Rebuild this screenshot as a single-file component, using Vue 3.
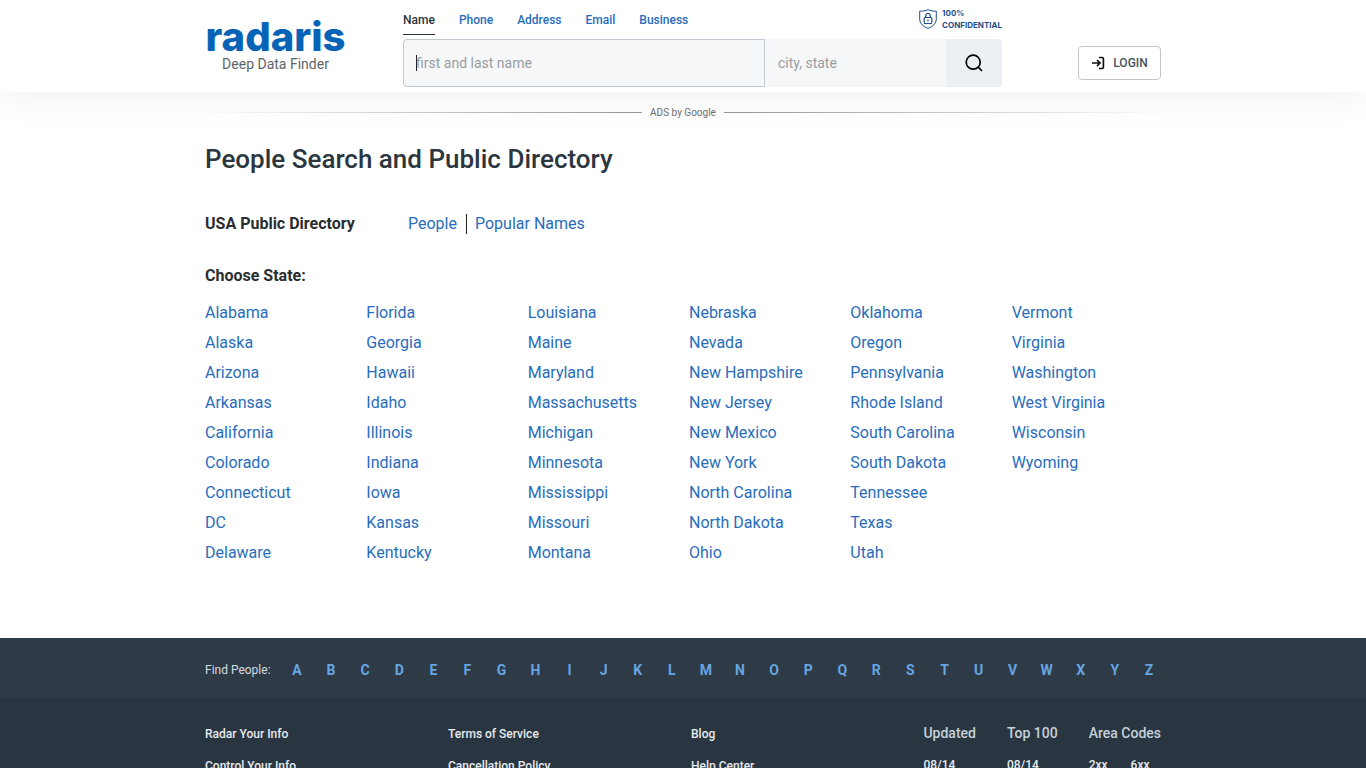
<script setup>
const tabs = ['Name', 'Phone', 'Address', 'Email', 'Business']
const states = [
  'Alabama', 'Alaska', 'Arizona', 'Arkansas', 'California', 'Colorado', 'Connecticut', 'DC', 'Delaware',
  'Florida', 'Georgia', 'Hawaii', 'Idaho', 'Illinois', 'Indiana', 'Iowa', 'Kansas', 'Kentucky',
  'Louisiana', 'Maine', 'Maryland', 'Massachusetts', 'Michigan', 'Minnesota', 'Mississippi', 'Missouri', 'Montana',
  'Nebraska', 'Nevada', 'New Hampshire', 'New Jersey', 'New Mexico', 'New York', 'North Carolina', 'North Dakota', 'Ohio',
  'Oklahoma', 'Oregon', 'Pennsylvania', 'Rhode Island', 'South Carolina', 'South Dakota', 'Tennessee', 'Texas', 'Utah',
  'Vermont', 'Virginia', 'Washington', 'West Virginia', 'Wisconsin', 'Wyoming',
]
const letters = 'ABCDEFGHIJKLMNOPQRSTUVWXYZ'.split('')
const footerColumns = [
  ['Radar Your Info', 'Control Your Info'],
  ['Terms of Service', 'Cancellation Policy'],
  ['Blog', 'Help Center'],
]
const indexes = [
  { title: 'Updated', links: ['08/14'] },
  { title: 'Top 100', links: ['08/14'] },
  { title: 'Area Codes', links: ['2xx', '6xx'] },
]
</script>

<template>
  <div class="page">
    <header class="header">
      <div class="container header-row">
        <a class="brand" href="#">
          <span class="logo">radaris</span>
          <span class="slogan">Deep Data Finder</span>
        </a>

        <div class="search">
          <div class="search-top">
            <nav class="tabs">
              <a v-for="(tab, i) in tabs" :key="tab" href="#" class="tab" :class="{ active: i === 0 }">{{ tab }}</a>
            </nav>
            <div class="confidential">
              <svg width="18" height="20" viewBox="0 0 18 20" fill="none" stroke="#1d5088" aria-hidden="true">
                <path d="M9 .7C6.500 1.900 3.500 2.200 .7 2.200V10c0 4.500 3.500 7.700 8.300 9.300 4.800-1.600 8.300-4.800 8.300-9.300V2.200C14.500 2.200 11.500 1.900 9 .7Z" />
                <rect x="5.200" y="8.500" width="7.600" height="6" rx="1" stroke-width="1.200" />
                <path d="M6.700 8.300V6.700a2.300 2.300 0 0 1 4.600 0v1.600" stroke-width="1.200" />
                <path d="M8.200 11.500h1.600" stroke-width="1.400" />
              </svg>
              <span>100%<br />CONFIDENTIAL</span>
            </div>
          </div>
          <form class="fields" @submit.prevent>
            <div class="name">
              <input class="field" type="text" placeholder="first and last name" aria-label="First and last name" />
            </div>
            <input class="field" type="text" placeholder="city, state" aria-label="City, state" />
            <button class="go" type="submit" aria-label="Search">
              <svg width="20" height="20" viewBox="0 0 20 20" fill="none" stroke="#000" stroke-width="1.700" aria-hidden="true">
                <circle cx="9.200" cy="9.200" r="7" />
                <path d="M14.200 14.200 18 18" />
              </svg>
            </button>
          </form>
        </div>

        <button class="login" type="button">
          <svg width="14" height="14" viewBox="0 0 14 14" fill="none" stroke="#111" stroke-width="1.700" aria-hidden="true">
            <path d="M1 7h8M6 4l3 3-3 3" />
            <path d="M8 1.500h3.200q1.200 0 1.200 1.200v8.600q0 1.200-1.200 1.200H8" />
          </svg>
          <span>LOGIN</span>
        </button>
      </div>
    </header>

    <main class="container main">
      <div class="ads"><i class="rule"></i><span>ADS by Google</span><i class="rule right"></i></div>
      <h1>People Search and Public Directory</h1>
      <div class="directory">
        <strong>USA Public Directory</strong>
        <a href="#">People</a>
        <i class="bar"></i>
        <a href="#">Popular Names</a>
      </div>
      <h2>Choose State:</h2>
      <ul class="states">
        <li v-for="s in states" :key="s"><a href="#">{{ s }}</a></li>
      </ul>
    </main>

    <footer class="footer">
      <div class="alphabet">
        <div class="container alphabet-row">
          <span class="find">Find People:</span>
          <nav class="letters">
            <a v-for="l in letters" :key="l" href="#">{{ l }}</a>
          </nav>
        </div>
      </div>
      <div class="container footer-row">
        <ul v-for="(col, i) in footerColumns" :key="i" class="footer-links">
          <li v-for="link in col" :key="link"><a href="#">{{ link }}</a></li>
        </ul>
        <div class="indexes">
          <section v-for="group in indexes" :key="group.title">
            <h3>{{ group.title }}</h3>
            <div class="codes">
              <a v-for="link in group.links" :key="link" href="#">{{ link }}</a>
            </div>
          </section>
        </div>
      </div>
    </footer>
  </div>
</template>

<style>
body { margin: 0; background: #fff; }
</style>

<style scoped>
.page {
  font-family: Roboto, "Liberation Sans", sans-serif;
  font-size: 16px;
  color: #2a2d30;
}
.page *, .page { box-sizing: border-box; }
a { color: #286dbd; text-decoration: none; }
ul { list-style: none; margin: 0; padding: 0; }
.container { width: 100%; max-width: 956px; margin: 0 auto; }

.header {
  position: relative;
  background: #fff;
  box-shadow: 0 0 40px rgba(0, 0, 0, .08);
}
.header-row { display: flex; height: 92px; }
.brand { display: flex; flex-direction: column; align-items: center; width: 141px; padding-top: 18px; }
.logo {
  font: 800 40px/38px Inter, "Liberation Sans", sans-serif;
  color: #0763b5;
}
.slogan { font-size: 14px; line-height: 16px; color: #606468; white-space: nowrap; }

.search { flex: 1; max-width: 599px; margin-left: 57px; }
.search-top { display: flex; justify-content: space-between; height: 39px; }
.tabs { display: flex; gap: 24px; }
.tab { height: 35px; padding-top: 12px; font-size: 12px; line-height: 16px; font-weight: 500; }
.tab.active { color: #2d343a; border-bottom: 1px solid #2d343a; }
.confidential {
  display: flex;
  gap: 5px;
  padding-top: 7px;
  font: 700 8px/12px Inter, Roboto, sans-serif;
  color: #1d5088;
}
.confidential svg { margin-top: 2px; }
.fields {
  display: grid;
  grid-template-columns: minmax(0, 2fr) minmax(0, 1fr) 56px;
  height: 48px;
  background: #f5f7f9;
  border-radius: 4px;
  overflow: hidden;
}
.field {
  min-width: 0;
  width: 100%;
  height: 100%;
  padding: 0 13px;
  border: 0;
  background: transparent;
  font: 14px/20px Roboto, "Liberation Sans", sans-serif;
  color: #222;
  outline: 0;
}
.field::placeholder { color: #999da0; opacity: 1; }
.name {
  position: relative;
  border: 1px solid #bfc9d3;
  border-radius: 4px 0 0 4px;
}
.name .field { padding: 0 12px; }
.name::before {
  content: "";
  position: absolute;
  left: 12px;
  top: 15px;
  width: 1px;
  height: 16px;
  background: #222;
}
.go {
  display: flex;
  align-items: center;
  justify-content: center;
  padding: 0;
  border: 0;
  background: #eceff3;
}
.login {
  display: flex;
  align-items: center;
  justify-content: center;
  gap: 8px;
  width: 83px;
  height: 34px;
  margin: 46px 0 0 auto;
  padding: 0;
  border: 1px solid #bfc7ce;
  border-radius: 4px;
  background: #fff;
  font: 500 12px/16px Roboto, "Liberation Sans", sans-serif;
  color: #46535f;
}

.main { padding-bottom: 70px; }
.ads {
  position: relative;
  display: flex;
  align-items: center;
  gap: 8px;
  padding-top: 14px;
  font-size: 10px;
  line-height: 13px;
  color: #6b6e70;
}
.rule { flex: 1; height: 1px; background: linear-gradient(to left, #929496, transparent); }
.rule.right { background: linear-gradient(to right, #929496, transparent); }
h1 { margin: 24px 0 0; font-size: 26px; line-height: 32px; font-weight: 500; color: #2b363e; }
.directory { display: flex; align-items: center; margin-top: 39px; line-height: 20px; }
.directory strong { width: 203px; font-weight: 700; }
.bar { width: 1px; height: 20px; margin: 0 8px 0 9px; background: #222; }
h2 { margin: 32px 0 12px; font-size: 16px; line-height: 20px; font-weight: 700; }
.states {
  display: grid;
  grid-auto-flow: column;
  grid-template-rows: repeat(9, 30px);
  grid-template-columns: repeat(6, minmax(0, 1fr));
  column-gap: 12px;
  line-height: 30px;
}

.footer { background: #293641; color: #d4dce3; }
.alphabet { background: #2e3b46; }
.alphabet-row { display: flex; align-items: center; height: 60px; padding-top: 4px; font-size: 12px; }
.find { width: 68px; white-space: nowrap; }
.letters { flex: 1; display: flex; justify-content: space-between; margin: 0 4px 0 16px; }
.letters a { width: 16px; text-align: center; font-size: 14px; line-height: 20px; font-weight: 700; color: #66a5e3; }
.footer-row { display: flex; padding-top: 20px; padding-bottom: 24px; }
.footer-links { width: 243px; font-size: 12px; line-height: 32px; font-weight: 500; }
.footer-links:nth-child(3) { width: auto; }
.footer-links a, .codes a { color: #e6ebef; }
.indexes { display: flex; gap: 31px; margin-left: auto; }
h3 { margin: 0; font-size: 14px; line-height: 30px; font-weight: 500; color: #c5d0d9; }
.codes { display: flex; gap: 23px; font-size: 12px; line-height: 34px; font-weight: 500; }
</style>
